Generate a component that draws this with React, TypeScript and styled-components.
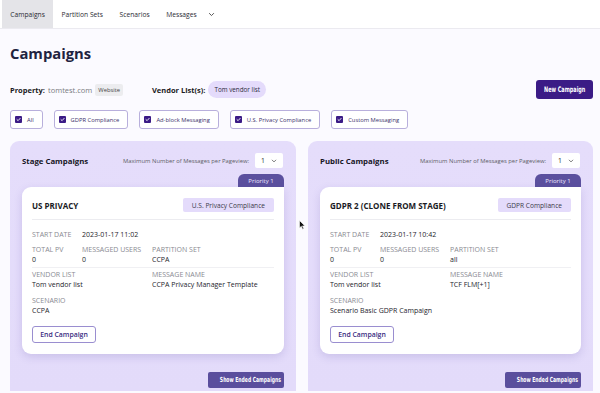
import React, { FC } from 'react';
import styled, { createGlobalStyle } from 'styled-components';

const GlobalStyle = createGlobalStyle`
  html, body {
    margin: 0;
    padding: 0;
    background: #fbfaff;
    font-family: 'Open Sans', 'Noto Sans', sans-serif;
    color: #1f2340;
  }
`;

const condensed = `'DejaVu Sans Condensed', 'Liberation Sans Narrow', 'DejaVu Sans', sans-serif`;

const Page = styled.div`
  position: relative;
  width: 600px;
  height: 393px;
  overflow: hidden;
`;

const Nav = styled.nav`
  display: flex;
  align-items: stretch;
  height: 28px;
  padding-left: 2px;
  background: #ffffff;
  border-bottom: 1px solid #ebeaf0;
`;

const Tab = styled.div<{ $active?: boolean }>`
  display: flex;
  align-items: center;
  gap: 11px;
  padding: 0 8.3px;
  font-size: 6.7px;
  color: #2a2a33;
  background: ${(p) => (p.$active ? '#e4e4e8' : 'transparent')};
`;

const Chevron: FC<{ size?: number; color?: string }> = ({ size = 6, color = '#444' }) => (
  <svg width={size} height={size} viewBox='0 0 10 10'>
    <path d='M2 3.5 L5 6.5 L8 3.5' fill='none' stroke={color} strokeWidth='1.3' strokeLinecap='round' strokeLinejoin='round' />
  </svg>
);

const Title = styled.h1`
  margin: 14px 0 0 10px;
  font-size: 14.8px;
  line-height: 20px;
  font-weight: 700;
  color: #1f2340;
`;

const InfoRow = styled.div`
  display: flex;
  align-items: center;
  height: 19px;
  margin: 17px 7px 0 10px;
  font-size: 7.5px;
`;

const InfoLabel = styled.span`
  font-weight: 700;
  color: #1b1b24;
  margin-right: 3px;
`;

const Muted = styled.span`
  color: #7a7a80;
  margin-right: 3px;
`;

const SmallBadge = styled.span`
  background: #ececef;
  color: #444;
  font-size: 5.8px;
  padding: 2px 3px;
  border-radius: 2px;
  margin-right: 29px;
`;

const Pill = styled.span`
  background: #e4dbfb;
  color: #2c2a3c;
  font-size: 6.3px;
  padding: 4px 6px;
  border-radius: 9px;
`;

const Narrow = styled.span`
  display: inline-block;
  transform: scaleX(0.72);
  white-space: nowrap;
`;

const PrimaryButton = styled.button`
  margin-left: auto;
  height: 19px;
  width: 57px;
  padding: 0;
  border: none;
  border-radius: 3px;
  background: #3b1b86;
  color: #ffffff;
  font-family: ${condensed};
  font-weight: 700;
  font-size: 7.6px;
`;

const FilterRow = styled.div`
  display: flex;
  gap: 11px;
  margin: 11px 0 0 10px;
`;

const Filter = styled.label`
  display: flex;
  align-items: center;
  gap: 5px;
  height: 17px;
  padding: 0 8px 0 4px;
  border: 1px solid #b8afdc;
  border-radius: 3px;
  background: #ffffff;
  font-size: 5.8px;
  font-weight: 500;
  color: #3a2f6b;
`;

const Box = styled.span`
  display: flex;
  align-items: center;
  justify-content: center;
  width: 7px;
  height: 7px;
  border-radius: 1px;
  background: #3b1b86;
`;

const Check = () => (
  <Box>
    <svg width='5' height='5' viewBox='0 0 10 10'>
      <path d='M2 5.2 L4.2 7.3 L8.2 2.8' fill='none' stroke='#fff' strokeWidth='1.8' strokeLinecap='round' strokeLinejoin='round' />
    </svg>
  </Box>
);

const Columns = styled.div`
  display: grid;
  grid-template-columns: 286px 285px;
  gap: 12px;
  margin: 12px 0 0 10px;
`;

const Panel = styled.section`
  height: 250px;
  padding: 12px 12px 0 12px;
  box-sizing: border-box;
  border-radius: 9px 9px 0 0;
  background: linear-gradient(#e5ddfb, #e3dbfa);
  display: flex;
  flex-direction: column;
`;

const PanelHead = styled.div`
  display: flex;
  align-items: center;
  height: 15px;
`;

const PanelTitle = styled.h2`
  margin: 0;
  font-size: 7.8px;
  font-weight: 700;
  color: #15151f;
  flex: 1;
`;

const MaxLabel = styled.span`
  font-size: 5.85px;
  color: #5d5d66;
  margin-right: 6px;
`;

const Select = styled.div`
  display: flex;
  align-items: center;
  gap: 6px;
  width: 28px;
  height: 15px;
  margin-right: 1px;
  padding-left: 6px;
  box-sizing: border-box;
  background: #ffffff;
  border-radius: 2px;
  font-size: 6.8px;
  color: #333;
`;

const PriorityTab = styled.div`
  align-self: flex-end;
  margin-top: 6px;
  width: 46px;
  height: 13px;
  display: flex;
  align-items: center;
  justify-content: center;
  border-radius: 6px 6px 0 0;
  background: #5b509e;
  color: #ece8ff;
  font-size: 6px;
`;

const Card = styled.div`
  background: #ffffff;
  border-radius: 9px 0 9px 9px;
  box-shadow: 0 3px 8px rgba(90, 70, 160, 0.18);
  padding: 11px 10px 11px 10px;
`;

const CardHead = styled.div`
  display: flex;
  align-items: center;
  justify-content: space-between;
  padding-bottom: 7px;
  border-bottom: 1px solid #ececf0;
`;

const CardTitle = styled.h3`
  margin: 0;
  font-size: 8px;
  font-weight: 700;
  color: #1a1a24;
`;

const TypeBadge = styled.span`
  height: 14px;
  display: flex;
  align-items: center;
  padding: 0 9px;
  border-radius: 2px;
  background: #e4dbfb;
  color: #3a3a48;
  font-size: 6.6px;
`;

const Grid = styled.div<{ $divider?: boolean }>`
  display: grid;
  grid-template-columns: 50px 70px 1fr;
  margin-top: 5px;
  padding-bottom: ${(p) => (p.$divider ? '2px' : '0')};
  border-bottom: ${(p) => (p.$divider ? '1px solid #f0f0f3' : 'none')};
`;

const Field = styled.div<{ $span?: number }>`
  grid-column: span ${(p) => p.$span ?? 1};
  display: flex;
  flex-direction: column;
`;

const Label = styled.span`
  font-size: 7px;
  line-height: 10px;
  color: #8a8a92;
`;

const Value = styled.span`
  font-size: 7px;
  line-height: 10px;
  color: #24242c;
`;

const OutlineButton = styled.button`
  margin-top: 10px;
  height: 17px;
  width: 64px;
  padding: 0;
  background: #ffffff;
  border: 1px solid #9a8ed0;
  border-radius: 3px;
  font-family: 'Open Sans', sans-serif;
  font-size: 6.9px;
  font-weight: 600;
  color: #3b2b7f;
`;

const EndedButton = styled.button`
  align-self: flex-end;
  margin-top: 18px;
  height: 16px;
  width: 76px;
  padding: 0;
  border: none;
  border-radius: 2px;
  background: #5a4e9d;
  color: #ffffff;
  font-family: ${condensed};
  font-weight: 700;
  font-size: 7px;
`;

const Cursor = styled.svg`
  position: absolute;
  left: 299px;
  top: 220px;
`;

interface Campaign {
  name: string;
  type: string;
  start: string;
  partition: string;
  message: string;
  scenario: string;
}

const CampaignPanel: FC<{ title: string; c: Campaign }> = ({ c, title }) => (
  <Panel>
    <PanelHead>
      <PanelTitle>{title}</PanelTitle>
      <MaxLabel>Maximum Number of Messages per Pageview:</MaxLabel>
      <Select>1<Chevron size={6} color='#555' /></Select>
    </PanelHead>
    <PriorityTab>Priority 1</PriorityTab>
    <Card>
      <CardHead>
        <CardTitle>{c.name}</CardTitle>
        <TypeBadge>{c.type}</TypeBadge>
      </CardHead>
      <Grid style={{ marginTop: 10 }}>
        <Label>START DATE</Label>
        <Value style={{ gridColumn: 'span 2' }}>{c.start}</Value>
      </Grid>
      <Grid $divider>
        <Field><Label>TOTAL PV</Label><Value>0</Value></Field>
        <Field><Label>MESSAGED USERS</Label><Value>0</Value></Field>
        <Field><Label>PARTITION SET</Label><Value>{c.partition}</Value></Field>
      </Grid>
      <Grid style={{ marginTop: 2 }}>
        <Field $span={2}><Label>VENDOR LIST</Label><Value>Tom vendor list</Value></Field>
        <Field><Label>MESSAGE NAME</Label><Value>{c.message}</Value></Field>
      </Grid>
      <Grid style={{ marginTop: 6 }}>
        <Field $span={3}><Label>SCENARIO</Label><Value>{c.scenario}</Value></Field>
      </Grid>
      <OutlineButton>End Campaign</OutlineButton>
    </Card>
    <EndedButton><Narrow>Show Ended Campaigns</Narrow></EndedButton>
  </Panel>
);

const stage: Campaign = {
  name: 'US PRIVACY',
  type: 'U.S. Privacy Compliance',
  start: '2023-01-17 11:02',
  partition: 'CCPA',
  message: 'CCPA Privacy Manager Template',
  scenario: 'CCPA',
};

const pub: Campaign = {
  name: 'GDPR 2 (CLONE FROM STAGE)',
  type: 'GDPR Compliance',
  start: '2023-01-17 10:42',
  partition: 'all',
  message: 'TCF FLM[+1]',
  scenario: 'Scenario Basic GDPR Campaign',
};

const filters = ['All', 'GDPR Compliance', 'Ad-block Messaging', 'U.S. Privacy Compliance', 'Custom Messaging'];

const App: FC = () => (
  <Page>
    <GlobalStyle />
    <Nav>
      <Tab $active>Campaigns</Tab>
      <Tab>Partition Sets</Tab>
      <Tab>Scenarios</Tab>
      <Tab>Messages <Chevron size={7} /></Tab>
    </Nav>
    <Title>Campaigns</Title>
    <InfoRow>
      <InfoLabel>Property:</InfoLabel>
      <Muted>tomtest.com</Muted>
      <SmallBadge>Website</SmallBadge>
      <InfoLabel>Vendor List(s):</InfoLabel>
      <Pill>Tom vendor list</Pill>
      <PrimaryButton><Narrow>New Campaign</Narrow></PrimaryButton>
    </InfoRow>
    <FilterRow>
      {filters.map((f) => (
        <Filter key={f}><Check />{f}</Filter>
      ))}
    </FilterRow>
    <Columns>
      <CampaignPanel c={stage} title='Stage Campaigns' />
      <CampaignPanel c={pub} title='Public Campaigns' />
    </Columns>
    <Cursor width='7' height='10' viewBox='0 0 7 10'>
      <path d='M0.5 0.5 L0.5 8 L2.3 6.3 L3.6 9.3 L4.8 8.8 L3.5 5.9 L6 5.9 Z' fill='#111' stroke='#fff' strokeWidth='0.6' />
    </Cursor>
  </Page>
);

export default App;
